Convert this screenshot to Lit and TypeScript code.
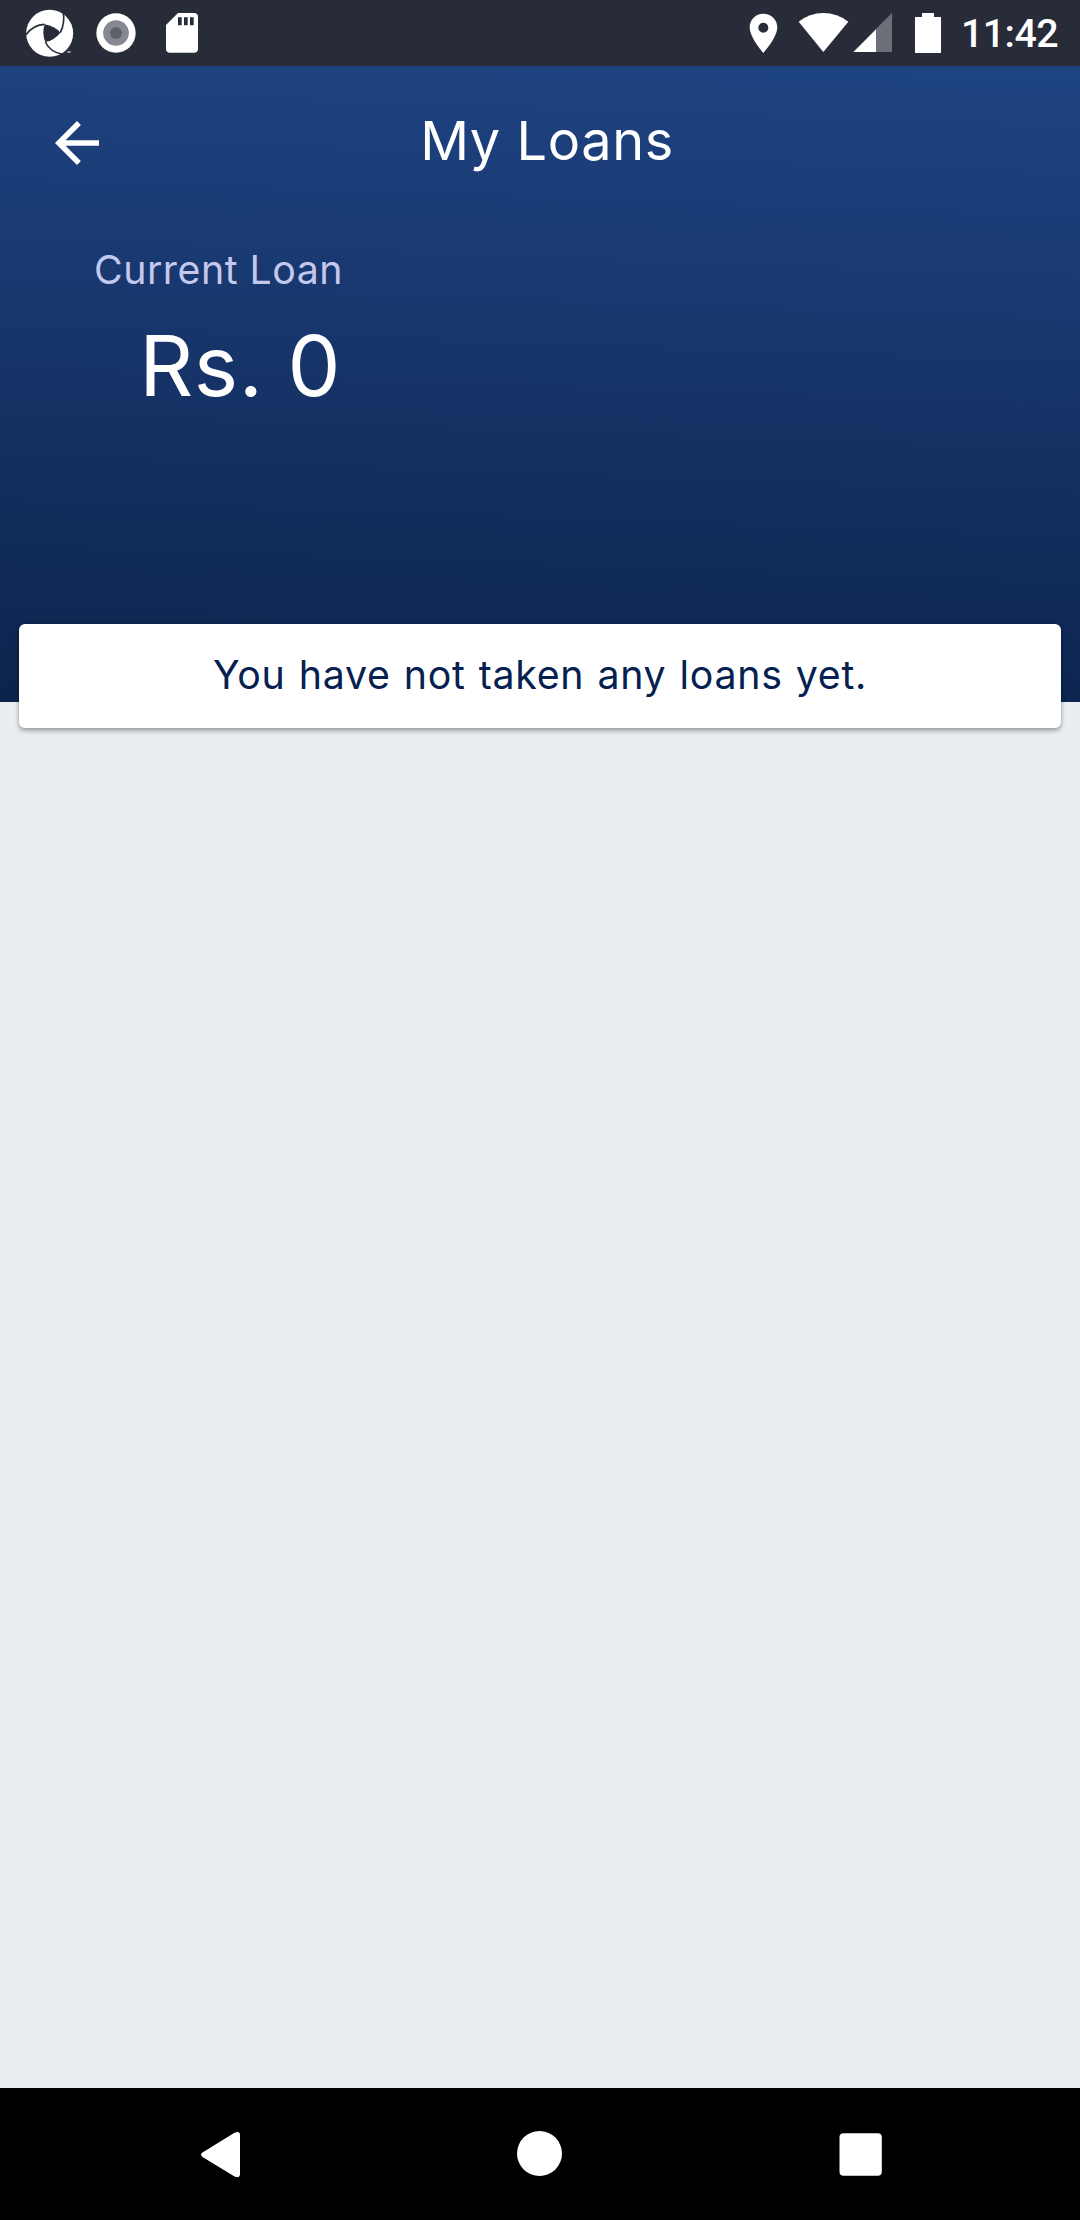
import { LitElement, html, css } from "lit";
import { customElement, property } from "lit/decorators.js";

@customElement("status-bar")
class StatusBar extends LitElement {
  static styles = css`
    :host { display: flex; align-items: flex-start; height: 66px; background: #282c38; box-sizing: border-box; padding: 0 22px 0 24px; }
    svg { display: block; height: 66px; flex: none; }
    .grow { flex: 1; }
    .time { width: 110px; text-align: right; font: 500 39.400px/66px Roboto, sans-serif; letter-spacing: -0.600px; color: #fff; padding-top: 1px; }
  `;
  render() {
    return html`
      <svg width="186" viewBox="72 0 558 198">
        <circle cx="149" cy="100" r="70.5" fill="#fff" />
        <path d="M134 73 Q164 78 181 98 Q163 121 136 126 Q125 100 134 73Z" fill="#282c38" />
        <g fill="none" stroke="#282c38" stroke-width="5">
          <path d="M78 104 Q100 74 134 73" />
          <path d="M189 33 Q196 68 181 98" />
          <path d="M136 126 Q151 157 188 163" />
        </g>
        <path d="M202 154h10v4h-10z" fill="#d4d5d7" />
        <circle cx="348" cy="99" r="59" fill="#fff" />
        <circle cx="348" cy="99" r="38.500" fill="#868991" />
        <circle cx="348" cy="99" r="18" fill="#5e616a" />
        <path d="M534 39h48q12 0 12 12v95q0 12-12 12h-72q-12 0-12-12V75z" fill="#fff" />
        <path d="M534 52h11v24h-11zM552 52h11v24h-11zM570 52h11v24h-11z" fill="#282c38" />
      </svg>
      <div class="grow"></div>
      <svg width="200" viewBox="54 0 600 198">
        <path fill="#fff" fill-rule="evenodd" d="M100 41C77 41 59 59 59 82C59 113 100 159 100 159S142 113 142 82C142 59 123 41 100 41ZM100 68a15 15 0 1 1 0 30a15 15 0 1 1 0-30Z" />
        <path fill="#fff" d="M206 65Q239 39 280 39T355 65L280 156Z" />
        <path fill="#6d7079" d="M486 39V156H437V88Z" />
        <path fill="#fff" d="M370 156L438 88V156Z" />
        <path fill="#fff" d="M576 39h36v12h21v108h-78V51h21z" />
      </svg>
      <div class="time">11:42</div>
    `;
  }
}

@customElement("loan-header")
class LoanHeader extends LitElement {
  @property() heading = "";
  @property() label = "";
  @property() amount = "";
  static styles = css`
    :host { display: block; height: 636px; box-sizing: border-box; color: #fff; background: linear-gradient(182deg, #1f4483, #0c234c); font-family: Inter, sans-serif; white-space: nowrap; }
    .bar { display: grid; grid-template-columns: 1fr auto 1fr; align-items: center; height: 154px; padding: 0 30px 0 44px; }
    .back { display: block; width: 66px; height: 66px; }
    .heading { font-size: 54px; line-height: 64px; letter-spacing: 0.600px; padding-bottom: 4px; }
    .summary { display: flex; flex-direction: column; align-items: flex-end; width: 343px; padding-top: 25px; }
    .label { font-size: 39.300px; line-height: 50px; letter-spacing: 0.500px; color: #c3c8ec; }
    .amount { font-size: 84px; line-height: 100px; letter-spacing: 0.500px; padding: 21px 2px 0 0; }
  `;
  render() {
    return html`
      <div class="bar">
        <svg class="back" viewBox="0 0 24 24" fill="#fff"><path d="M20 11H7.830l5.590-5.590L12 4l-8 8 8 8 1.410-1.410L7.830 13H20v-2z" /></svg>
        <div class="heading">${this.heading}</div>
      </div>
      <div class="summary">
        <div class="label">${this.label}</div>
        <div class="amount">${this.amount}</div>
      </div>
    `;
  }
}

@customElement("nav-bar")
class NavBar extends LitElement {
  static styles = css`
    :host { display: block; height: 132px; background: #000; }
    svg { display: block; width: 1080px; height: 132px; }
  `;
  render() {
    return html`
      <svg viewBox="0 0 1080 132" fill="#fff">
        <path d="M202.500 64.500L234.500 44.700Q240 42.500 240 47V86Q240 90.500 234.500 88.500L202.500 69Q199.500 66.500 202.500 64.500Z" />
        <circle cx="539.500" cy="65.500" r="22.500" />
        <rect x="839.500" y="45.300" width="42.300" height="42.500" rx="4" />
      </svg>
    `;
  }
}

@customElement("app-root")
class AppRoot extends LitElement {
  static styles = css`
    :host { display: flex; flex-direction: column; width: 1080px; height: 2220px; overflow: hidden; background: #eaeef1; }
    .content { flex: 1; }
    .card { margin: -78px 19px 0; height: 104px; box-sizing: border-box; padding-bottom: 3px; border-radius: 6px; background: #fff; color: #06214f; display: flex; align-items: center; justify-content: center; position: relative; box-shadow: 0 3px 5px rgba(0, 0, 0, 0.300), 0 0 4px rgba(0, 0, 0, 0.120); font: 39.300px/50px Inter, sans-serif; letter-spacing: 0.700px; word-spacing: 1.500px; white-space: nowrap; }
  `;
  render() {
    return html`
      <status-bar></status-bar>
      <loan-header heading="My Loans" label="Current Loan" amount="Rs. 0"></loan-header>
      <div class="content"><div class="card"><span>You have not taken any loans yet.</span></div></div>
      <nav-bar></nav-bar>
    `;
  }
}
